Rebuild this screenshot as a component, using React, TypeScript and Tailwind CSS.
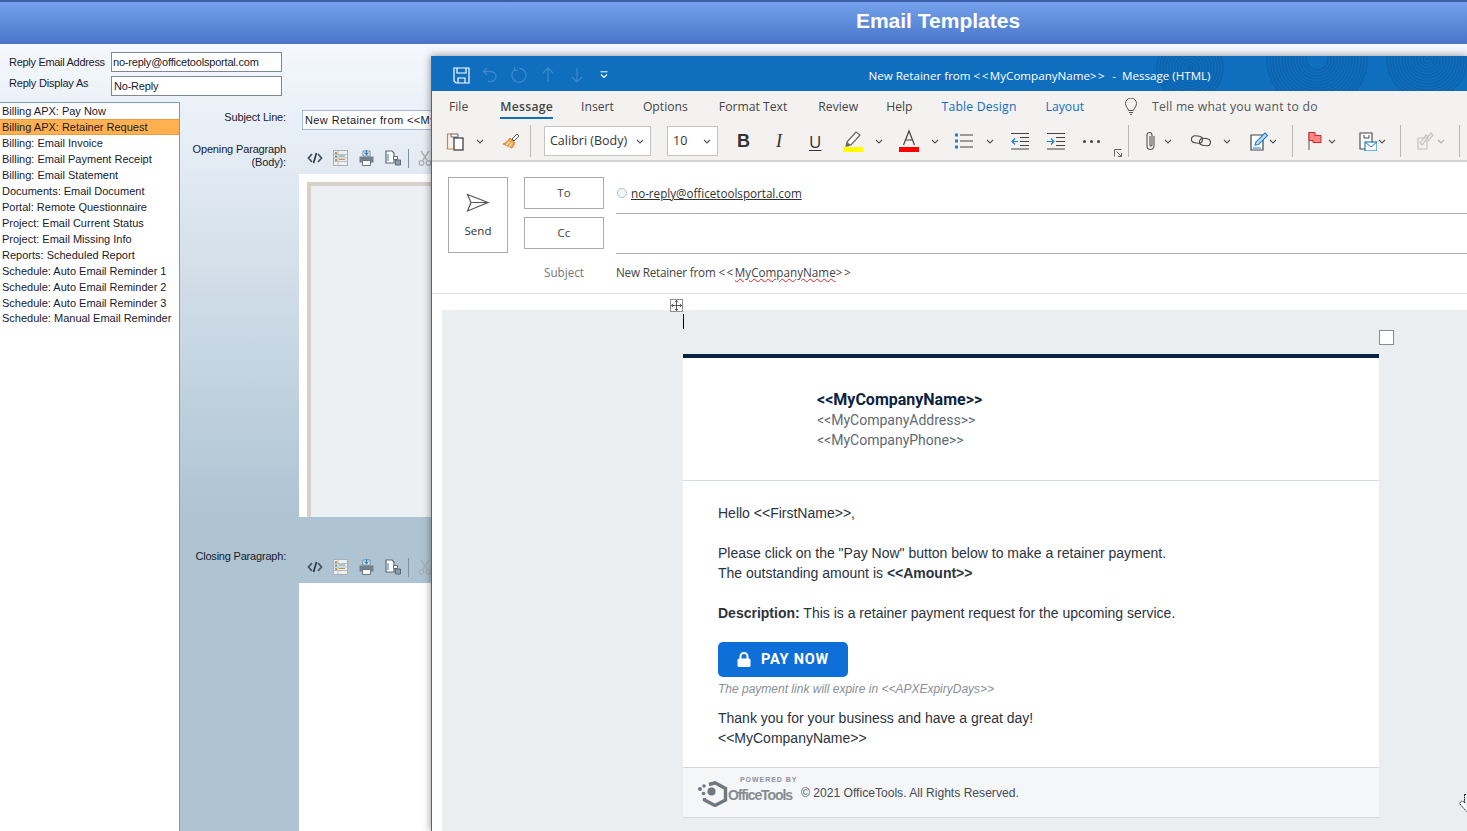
import React from "react";

const S = "[font-family:'Open_Sans','Noto_Sans',sans-serif]";

const templates = [
  "Billing APX: Pay Now",
  "Billing APX: Retainer Request",
  "Billing: Email Invoice",
  "Billing: Email Payment Receipt",
  "Billing: Email Statement",
  "Documents: Email Document",
  "Portal: Remote Questionnaire",
  "Project: Email Current Status",
  "Project: Email Missing Info",
  "Reports: Scheduled Report",
  "Schedule: Auto Email Reminder 1",
  "Schedule: Auto Email Reminder 2",
  "Schedule: Auto Email Reminder 3",
  "Schedule: Manual Email Reminder",
];

function Chev({ className = "" }: { className?: string }) {
  return (
    <svg width="8" height="5" viewBox="0 0 8 5" className={"shrink-0 " + className}>
      <path d="M1 1l3 3 3-3" fill="none" stroke="#555" strokeWidth="1.1" />
    </svg>
  );
}

function Sep({ className = "" }: { className?: string }) {
  return <div className={"w-px h-[32px] bg-[#b9b9b9] shrink-0 " + className} />;
}

function EditorTools() {
  return (
    <div className="flex items-center h-[20px]">
      <svg width="16" height="12" viewBox="0 0 16 12" className="ml-[8px]">
        <path d="M5 2L1.500 6 5 10M11 2l3.500 4L11 10" fill="none" stroke="#4a5560" strokeWidth="1.8" />
        <path d="M9.400 1L6.600 11" stroke="#26323c" strokeWidth="1.6" />
      </svg>
      <svg width="15" height="16" viewBox="0 0 15 16" className="ml-[10px]">
        <rect x="0.500" y="0.500" width="14" height="15" fill="#eef0f0" stroke="#a8b0b4" />
        <path d="M5 1v14M1 4.500h13M1 8h13M1 11.500h13" stroke="#b8bec2" />
        <rect x="2" y="2" width="2" height="2" fill="#d88a48" />
        <rect x="2" y="5.500" width="2" height="2" fill="#5aa08a" />
        <rect x="2" y="9" width="2" height="2" fill="#d88a48" />
        <rect x="6" y="5.500" width="6" height="1" fill="#5aa08a" />
        <rect x="6" y="9" width="6" height="1" fill="#d88a48" />
      </svg>
      <svg width="15" height="16" viewBox="0 0 15 16" className="ml-[11px]">
        <path d="M4 1h7v5H4z" fill="#fff" stroke="#7a8790" />
        <path d="M7.500 0v4M5.500 2.600l2 2 2-2" fill="none" stroke="#2c7fc4" strokeWidth="1.3" />
        <path d="M0.500 6.500h14v6h-14z" fill="#75818a" />
        <path d="M3.500 10.500h8v5h-8z" fill="#fff" stroke="#6a767f" />
      </svg>
      <svg width="16" height="16" viewBox="0 0 16 16" className="ml-[11px]">
        <path d="M1 1h6l2 2v10H1z" fill="#fff" stroke="#5d6a74" strokeWidth="1.2" />
        <path d="M3 4v7" stroke="#2e7dbb" strokeWidth="1" />
        <path d="M8.500 6.500h4v3h-4z" fill="#fff" stroke="#5d6a74" />
        <path d="M10.500 10h5v5h-5z" fill="#8ba0b0" stroke="#5d6a74" />
      </svg>
      <div className="w-px h-[19px] bg-[#7f8f9b] ml-[7px]" />
      <svg width="14" height="16" viewBox="0 0 14 16" className="ml-[9px]">
        <path d="M3 1l6 9M11 1L5 10" stroke="#a9b0b4" strokeWidth="1.4" />
        <circle cx="3.500" cy="13" r="2.400" fill="none" stroke="#a9b0b4" strokeWidth="1.3" />
        <circle cx="10.500" cy="13" r="2.400" fill="none" stroke="#a9b0b4" strokeWidth="1.3" />
      </svg>
    </div>
  );
}

function Rings() {
  return (
    <svg className="absolute left-[700px] top-0 w-[336px] h-[35px]" viewBox="0 0 336 35">
      {[
        [58, 12, 33],
        [185, 3, 50],
        [295, 3, 40],
      ].map(([cx, cy, rm], i) => (
        <g key={i} fill="none" stroke="#0c5fa8" strokeWidth="1.6" opacity="0.7">
          {Array.from({ length: 14 }).map((_, j) => (
            <circle key={j} cx={cx} cy={cy} r={Math.max(rm - j * 3, 1)} />
          ))}
        </g>
      ))}
    </svg>
  );
}

function TitleBar() {
  return (
    <div className="relative h-[35px] pt-[3px] bg-[#106ebe] flex items-center shrink-0 overflow-hidden">
      <Rings />
      <svg width="17" height="17" viewBox="0 0 17 17" className="ml-[21px] relative">
        <path d="M1 1h15v15H3l-2-2z" fill="none" stroke="#fff" strokeWidth="1.2" />
        <path d="M4 1v5h9V1M5 16v-5h7v5" fill="none" stroke="#fff" strokeWidth="1.2" />
      </svg>
      <svg width="16" height="16" viewBox="0 0 16 16" className="ml-[12px] relative">
        <path d="M5 1L1.500 4.500 5 8M2 4.500h7a5 5 0 0 1 0 10H6" fill="none" stroke="#3a87cc" strokeWidth="1.3" />
      </svg>
      <svg width="18" height="18" viewBox="0 0 18 18" className="ml-[12px] relative">
        <path d="M5 3.500a7 7 0 1 0 4-1.200M4.500 0.800v3.500h3.500" fill="none" stroke="#3a87cc" strokeWidth="1.3" />
      </svg>
      <svg width="12" height="16" viewBox="0 0 12 16" className="ml-[14px] relative">
        <path d="M6 15V1M1 6l5-5 5 5" fill="none" stroke="#3a87cc" strokeWidth="1.3" />
      </svg>
      <svg width="12" height="16" viewBox="0 0 12 16" className="ml-[17px] relative">
        <path d="M6 1v14M1 10l5 5 5-5" fill="none" stroke="#3a87cc" strokeWidth="1.3" />
      </svg>
      <svg width="8" height="8" viewBox="0 0 8 8" className="ml-[17px] relative">
        <path d="M0.500 0.800h7" stroke="#fff" strokeWidth="1" />
        <path d="M1 3.500l3 3 3-3" fill="none" stroke="#fff" strokeWidth="1.2" />
      </svg>
      <div className={"absolute inset-0 pt-[4px] flex items-center justify-center text-white text-[11.600px] pl-[180px] " + S}>
        <span className="whitespace-pre">
          New Retainer from <span className="tracking-[1.5px]">&lt;&lt;</span>MyCompanyName
          <span className="tracking-[1.5px]">&gt;&gt;</span>  -  Message (HTML)
        </span>
      </div>
    </div>
  );
}

function Tabs() {
  const dark = "text-[#444] text-[12.200px]";
  return (
    <div className={"h-[33px] pb-[2px] flex items-center shrink-0 " + S}>
      <span className={"ml-[17px] " + dark}>File</span>
      <span className="relative ml-[32px] text-[#444] text-[12.200px] font-semibold tracking-[0.25px]">
        Message
        <span className="absolute left-0 right-0 top-[18px] h-[2px] bg-[#106ebe]" />
      </span>
      <span className={"ml-[28px] " + dark}>Insert</span>
      <span className={"ml-[29px] " + dark}>Options</span>
      <span className={"ml-[31px] " + dark}>Format Text</span>
      <span className={"ml-[31px] " + dark}>Review</span>
      <span className={"ml-[28px] " + dark}>Help</span>
      <span className="ml-[29px] text-[#106ebe] text-[12.200px] tracking-[0.2px]">Table Design</span>
      <span className="ml-[29px] text-[#106ebe] text-[12.200px]">Layout</span>
      <svg width="14" height="18" viewBox="0 0 14 18" className="ml-[40px]">
        <path d="M4.500 12.500c0-2-3-3.500-3-7a5.500 5.500 0 0 1 11 0c0 3.500-3 5-3 7z" fill="none" stroke="#555" strokeWidth="1" />
        <path d="M5 14.500h4M6 16.500h2" stroke="#555" strokeWidth="1" />
      </svg>
      <span className="ml-[14px] text-[#555] text-[12.200px] tracking-[0.2px]">Tell me what you want to do</span>
    </div>
  );
}

function Tools() {
  return (
    <div className={"relative h-[38px] pb-[2px] border-b-2 border-[#d2d2d2] flex items-center shrink-0 " + S}>
      <svg width="20" height="20" viewBox="0 0 20 20" className="ml-[14px]">
        <path d="M6 3H1.500v15H7" fill="none" stroke="#d9822b" strokeWidth="1.2" />
        <path d="M5 3h7v3H5z" fill="#fff" stroke="#666" />
        <rect x="8" y="7" width="9" height="12" fill="#fff" stroke="#333" strokeWidth="1.2" />
      </svg>
      <Chev className="ml-[10px]" />
      <svg width="20" height="18" viewBox="0 0 20 18" className="ml-[17px]">
        <path d="M11 7l5-5 2 2-5 5z" fill="#fff" stroke="#555" />
        <path d="M9 6l5 5-3 5-9-4c3-1 5-3 7-6z" fill="#f2a654" stroke="#d9822b" />
        <path d="M5 13l4-3M8 15l3-4" stroke="#fff" />
      </svg>
      <Sep className="ml-[9px]" />
      <div className="ml-[13px] w-[107px] h-[30px] border border-[#c4c4c4] bg-white flex items-center justify-between pl-[5px] pr-[6px] text-[12.500px] text-[#333]">
        Calibri (Body)
        <Chev />
      </div>
      <div className="ml-[16px] w-[51px] h-[30px] border border-[#c4c4c4] bg-white flex items-center justify-between pl-[5px] pr-[6px] text-[12.500px] text-[#333]">
        10
        <Chev />
      </div>
      <span className="ml-[19px] w-[12px] text-center text-[18px] leading-none font-bold text-[#333] [font-family:'Liberation_Sans',sans-serif]">B</span>
      <span className="ml-[24px] w-[12px] text-center text-[18px] leading-none italic text-[#333] [font-family:'Liberation_Serif',serif]">I</span>
      <span className="ml-[24px] w-[12px] text-center text-[17px] leading-none underline underline-offset-2 text-[#333]">U</span>
      <svg width="20" height="24" viewBox="0 0 20 24" className="ml-[22px]">
        <path d="M4 13l9-10 4 3-9 10H4z" fill="#fff" stroke="#666" strokeWidth="1.2" />
        <path d="M4 13l4 3-3 1.500H2z" fill="#666" />
        <rect y="18" width="20" height="5" fill="#ffff00" />
      </svg>
      <Chev className="ml-[12px]" />
      <svg width="20" height="24" viewBox="0 0 20 24" className="ml-[16px]">
        <path d="M4.500 16L10 2l5.500 14M6.500 11h7" fill="none" stroke="#444" strokeWidth="1.2" />
        <rect y="18" width="20" height="5" fill="#ff0000" />
      </svg>
      <Chev className="ml-[12px]" />
      <svg width="18" height="18" viewBox="0 0 18 18" className="ml-[16px]">
        <rect x="0" y="1.500" width="3" height="3" fill="#1e7fce" />
        <rect x="0" y="7.500" width="3" height="3" fill="#1e7fce" />
        <rect x="0" y="13.500" width="3" height="3" fill="#1e7fce" />
        <path d="M5 3h13M5 9h13M5 15h13" stroke="#444" />
      </svg>
      <Chev className="ml-[13px]" />
      <svg width="18" height="18" viewBox="0 0 18 18" className="ml-[17px]">
        <path d="M0 1.500h18M9 5.500h9M9 9.500h9M9 13.500h9M0 17h18" stroke="#444" />
        <path d="M7 9.500H1M4 6.500l-3 3 3 3" fill="none" stroke="#1e7fce" strokeWidth="1.2" />
      </svg>
      <svg width="18" height="18" viewBox="0 0 18 18" className="ml-[18px]">
        <path d="M0 1.500h18M9 5.500h9M9 9.500h9M9 13.500h9M0 17h18" stroke="#444" />
        <path d="M0 9.500h6M4 6.500l3 3-3 3" fill="none" stroke="#1e7fce" strokeWidth="1.2" />
      </svg>
      <div className="ml-[18px] flex gap-[4px]">
        <span className="w-[3px] h-[3px] bg-[#444] rounded-full" />
        <span className="w-[3px] h-[3px] bg-[#444] rounded-full" />
        <span className="w-[3px] h-[3px] bg-[#444] rounded-full" />
      </div>
      <svg width="8" height="8" viewBox="0 0 8 8" className="absolute left-[682px] top-[25px]">
        <path d="M0.500 7.500v-7h7M2.500 2.500l5 5M7.500 4v3.500H4" fill="none" stroke="#555" strokeWidth="0.9" />
      </svg>
      <Sep className="ml-[28px]" />
      <svg width="12" height="20" viewBox="0 0 12 20" className="ml-[16px]">
        <path d="M9 5v10a3.500 3.500 0 0 1-7 0V4a2.500 2.500 0 0 1 5 0v10a1 1 0 0 1-2 0V5" fill="none" stroke="#555" strokeWidth="1.1" />
      </svg>
      <Chev className="ml-[7px]" />
      <svg width="20" height="12" viewBox="0 0 20 12" className="ml-[19px]">
        <rect x="0.500" y="1" width="11" height="7" rx="3.500" fill="none" stroke="#444" strokeWidth="1.1" transform="rotate(8 6 4)" />
        <rect x="8.500" y="3.500" width="11" height="7" rx="3.500" fill="none" stroke="#444" strokeWidth="1.1" transform="rotate(8 14 7)" />
      </svg>
      <Chev className="ml-[12px]" />
      <svg width="19" height="19" viewBox="0 0 19 19" className="ml-[19px]">
        <path d="M1 3h12v15H1z" fill="#fff" stroke="#444" strokeWidth="1.2" />
        <path d="M5 13l1-3 9-9 2.500 2.500-9 9z" fill="#bfe0f5" stroke="#1e7fce" strokeWidth="1.1" />
        <path d="M3 16h8" stroke="#1e7fce" />
      </svg>
      <Chev className="ml-[0px]" />
      <Sep className="ml-[15px]" />
      <svg width="14" height="18" viewBox="0 0 14 18" className="ml-[15px]">
        <path d="M1 0v18" stroke="#555" />
        <path d="M1 0.500h6v8H1z" fill="#f88" stroke="#d22" />
        <path d="M7 3.500h6v7H5v-2" fill="#f88" stroke="#d22" />
      </svg>
      <Chev className="ml-[6px]" />
      <svg width="18" height="19" viewBox="0 0 18 19" className="ml-[23px]">
        <path d="M1 1h12v16H1z" fill="#fff" stroke="#444" strokeWidth="1.1" />
        <path d="M5 3v3h5V3" fill="none" stroke="#444" />
        <rect x="6" y="10" width="12" height="9" fill="#fff" stroke="#1e7fce" strokeWidth="1.2" />
        <path d="M6 10l6 5 6-5" fill="none" stroke="#1e7fce" />
      </svg>
      <Chev className="ml-[1px]" />
      <Sep className="ml-[14px]" />
      <svg width="18" height="18" viewBox="0 0 18 18" className="ml-[16px]">
        <path d="M1 6h9v11H1z" fill="none" stroke="#c2c2c2" strokeWidth="1.2" />
        <path d="M3 11l6-8 2 2-6 8zM9 7l5-6 2 2-5 6" fill="none" stroke="#c2c2c2" strokeWidth="1.2" />
      </svg>
      <Chev className="ml-[2px] opacity-40" />
      <Sep className="ml-[14px]" />
    </div>
  );
}

function Compose() {
  return (
    <div className={"h-[132px] border-b border-[#e1e1e1] flex shrink-0 text-[#444] " + S}>
      <div className="ml-[16px] mt-[15px] w-[60px] h-[76px] border border-[#ababab] flex flex-col items-center">
        <svg width="24" height="20" viewBox="0 0 24 20" className="mt-[15px]">
          <path d="M1.500 1.500L22 9.500 1.500 18 5 9.500zM5 9.500h17" fill="none" stroke="#555" strokeWidth="1.2" />
        </svg>
        <span className="text-[11.500px] mt-[10px] text-[#333]">Send</span>
      </div>
      <div className="ml-[16px] mt-[15px] w-[80px] flex flex-col gap-[8px]">
        <div className="h-[32px] border border-[#ababab] flex items-center justify-center text-[11.500px]">To</div>
        <div className="h-[32px] border border-[#ababab] flex items-center justify-center text-[11.500px]">Cc</div>
      </div>
      <div className="ml-[12px] flex-1 flex flex-col">
        <div className="h-[52px] border-b border-[#ababab] flex items-center pt-[11px] text-[12px]">
          <span className="w-[10px] h-[10px] rounded-full border border-[#a9c2d6] bg-[#f6f9fb] ml-[1px] mr-[4px]" />
          <span className="underline text-[#333] text-[11.700px] tracking-[-0.03px]">no-reply@officetoolsportal.com</span>
        </div>
        <div className="h-[40px] border-b border-[#ababab]" />
        <div className="h-[39px] pb-[4px] flex items-center text-[11.700px] text-[#444] whitespace-pre">
          <span className="tracking-[-0.2px]">New Retainer from </span>
          <span className="tracking-[1.5px]">&lt;&lt;</span>
          <span className="underline decoration-wavy decoration-[#d22] decoration-1">MyCompanyName</span>
          <span className="tracking-[1.5px]">&gt;&gt;</span>
        </div>
      </div>
      <span className="absolute left-[112px] top-[208px] text-[11.700px] text-[#777]">Subject</span>
    </div>
  );
}

function EmailCard() {
  return (
    <div className="w-[696px] ml-[241px] mt-[44px] text-[14px] text-[#2b3340]">
      <div className="h-[127px] bg-white border-t-4 border-[#0c2340] border-b border-b-[#d6dde3] pl-[134px] pt-[32px] leading-[20px] [font-family:'Roboto',sans-serif]">
        <div className="text-[16px] font-bold text-[#0c2340]">&lt;&lt;MyCompanyName&gt;&gt;</div>
        <div className="text-[#5f6a72]">&lt;&lt;MyCompanyAddress&gt;&gt;</div>
        <div className="text-[#5f6a72]">&lt;&lt;MyCompanyPhone&gt;&gt;</div>
      </div>
      <div className="h-[286px] bg-white px-[35px] pt-[22px] leading-[20px]">
        <p>Hello &lt;&lt;FirstName&gt;&gt;,</p>
        <p className="mt-[20px]">Please click on the "Pay Now" button below to make a retainer payment.</p>
        <p>
          The outstanding amount is <b>&lt;&lt;Amount&gt;&gt;</b>
        </p>
        <p className="mt-[20px]">
          <b>Description:</b> This is a retainer payment request for the upcoming service.
        </p>
        <div className="mt-[19px] w-[130px] h-[35px] rounded-[5px] bg-[#0f6fd8] text-white font-bold tracking-[0.8px] text-[14.500px] flex items-center pl-[19px] [font-family:'Roboto',sans-serif]">
          <svg width="14" height="15" viewBox="0 0 14 15" className="mr-[10px]">
            <path d="M3.500 7V4.500a3.500 3.500 0 0 1 7 0V7" fill="none" stroke="#fff" strokeWidth="2" />
            <rect x="0.500" y="6.500" width="13" height="8.500" rx="1.500" fill="#fff" />
          </svg>
          PAY NOW
        </div>
        <p className="mt-[2px] text-[12px] italic text-[#8a8f96]">The payment link will expire in &lt;&lt;APXExpiryDays&gt;&gt;</p>
        <p className="mt-[9px]">Thank you for your business and have a great day!</p>
        <p>&lt;&lt;MyCompanyName&gt;&gt;</p>
      </div>
      <div className="h-[51px] bg-[#f5f6f8] border-y border-[#d3d9df] flex items-center pl-[14px]">
        <div className="relative w-[97px] h-[38px] shrink-0">
          <span className="absolute left-[43px] top-[2px] text-[7px] leading-[8px] font-bold tracking-[0.950px] whitespace-nowrap text-[#8a9097]">POWERED BY</span>
          <svg width="31" height="26" viewBox="0 0 31 26" className="absolute left-0 top-[7px]">
            <path d="M12 3.500L18 1.800l10.500 5.700v11.500L18 24.500l-10.500-5.500v-2" fill="none" stroke="#6f7780" strokeWidth="3.400" />
            <circle cx="14.500" cy="10.500" r="4" fill="#6f7780" />
            <circle cx="7" cy="5" r="1.700" fill="#6f7780" />
            <circle cx="3" cy="8" r="2" fill="#6f7780" />
            <circle cx="6.500" cy="12.500" r="1.800" fill="#6f7780" />
          </svg>
          <span className="absolute left-[31px] top-[13px] text-[14px] leading-[16px] font-bold tracking-[-1.100px] text-[#858b92]">OfficeTools</span>
        </div>
        <span className="ml-[7px] pt-[1px] text-[12.100px] text-[#444b55]">© 2021 OfficeTools. All Rights Reserved.</span>
      </div>
    </div>
  );
}

export default function App() {
  return (
    <div className="relative w-[1467px] h-[831px] overflow-hidden bg-white text-[11px] leading-[16px] text-[#1a1a2a] [font-family:'Liberation_Sans',Arial,sans-serif]">
      <header className="h-[44px] border-t-2 border-[#3e5fa8] bg-gradient-to-b from-[#74a2ec] to-[#4a75c8] flex items-center justify-center pl-[409px] pb-[4px]">
        <h1 className="text-[21px] leading-[26px] font-bold text-white">Email Templates</h1>
      </header>
      <main className="h-[787px] bg-gradient-to-b from-[#f5f8fe] to-[#aec4d3] to-[60%] flex flex-col">
        <div className="pt-[8px] pl-[9px] pb-[6px] flex flex-col gap-[4px] shrink-0">
          <div className="flex items-center h-[20px]">
            <label className="w-[102px] tracking-[-0.3px] whitespace-nowrap">Reply Email Address</label>
            <div className="w-[171px] h-[20px] bg-white border border-[#808890] px-[1px] leading-[18px] tracking-[-0.2px]">no-reply@officetoolsportal.com</div>
          </div>
          <div className="flex h-[20px]">
            <label className="w-[102px] mt-[-1px] tracking-[-0.2px]">Reply Display As</label>
            <div className="w-[171px] h-[20px] bg-white border border-[#808890] px-[2px] leading-[18px] tracking-[-0.2px]">No-Reply</div>
          </div>
        </div>
        <div className="flex-1 flex min-h-0">
          <aside className="w-[180px] shrink-0 bg-white border-t border-r border-[#7c9cbc]">
            {templates.map((t, i) => (
              <div
                key={t}
                className={
                  "h-[16px] pl-[2px] whitespace-nowrap " +
                  (i === 1 ? "bg-[#ffb050] border-y border-[#f09a40] leading-[14px]" : "") +
                  (i === 13 ? " mt-[-1px]" : "")
                }
              >
                {t}
              </div>
            ))}
          </aside>
          <section className="flex-1 flex flex-col">
            <div className="flex mt-[8px] h-[20px] items-start">
              <label className="w-[106px] mt-[-1px] text-right tracking-[-0.15px]">Subject Line:</label>
              <div className="ml-[16px] w-[260px] h-[20px] bg-white border border-[#a4bce4] pl-[2px] leading-[18px] tracking-[0.4px] whitespace-nowrap text-[11px]">
                New Retainer from &lt;&lt;MyCompanyName&gt;&gt;
              </div>
            </div>
            <div className="flex mt-[13px] h-[31px]">
              <label className="w-[106px] text-right leading-[13px] tracking-[-0.15px]">
                Opening Paragraph
                <br />
                (Body):
              </label>
              <div className="ml-[13px] mt-[5px]">
                <EditorTools />
              </div>
            </div>
            <div className="ml-[119px] h-[343px] bg-white pl-[8px] pt-[8px]">
              <div className="h-[335px] border-l-4 border-t-4 border-[#d9cfcb] bg-[#ecf0f3]" />
            </div>
            <div className="flex mt-[31px] h-[35px]">
              <label className="w-[106px] text-right tracking-[-0.2px]">Closing Paragraph:</label>
              <div className="ml-[13px] mt-[9px]">
                <EditorTools />
              </div>
            </div>
            <div className="ml-[119px] flex-1 bg-white" />
          </section>
        </div>
      </main>

      <div className="absolute left-[431px] top-[56px] w-[1036px] h-[775px] bg-white border-l border-[#2e6da8] shadow-[0_0_8px_rgba(0,0,0,0.45)] flex flex-col">
        <TitleBar />
        <div className="bg-[#f3f2f1] shrink-0">
          <Tabs />
          <Tools />
        </div>
        <Compose />
        <div className="relative flex-1 bg-white pt-[16px] pl-[10px] overflow-hidden">
          <div className="h-[560px] bg-[#eaeef1] flow-root">
            <EmailCard />
          </div>
          <div className="absolute left-[238px] top-[5px] w-[13px] h-[13px] border border-[#8f8f8f] bg-white flex items-center justify-center">
            <svg width="11" height="11" viewBox="0 0 11 11">
              <path d="M5.500 0.500v10M0.500 5.500h10M3.800 2L5.500 0.500 7.200 2M3.800 9l1.700 1.500L7.200 9M2 3.800L0.500 5.500 2 7.200M9 3.800l1.500 1.700L9 7.200" fill="none" stroke="#444" strokeWidth="0.9" />
            </svg>
          </div>
          <div className="absolute left-[251px] top-[20px] w-px h-[15px] bg-black" />
          <div className="absolute left-[947px] top-[36px] w-[15px] h-[15px] border border-[#8a8a8a] bg-white" />
          <svg width="10" height="18" viewBox="0 0 10 18" className="absolute left-[1027px] top-[500px]">
            <path d="M5.500 0.500v9M8.500 0.500v9M5.500 0.500h3M5.500 8L2.500 7 0.500 9.500l7 8" fill="#fff" stroke="#111" strokeWidth="1" strokeDasharray="1.500 0.800" />
          </svg>
        </div>
      </div>
    </div>
  );
}
